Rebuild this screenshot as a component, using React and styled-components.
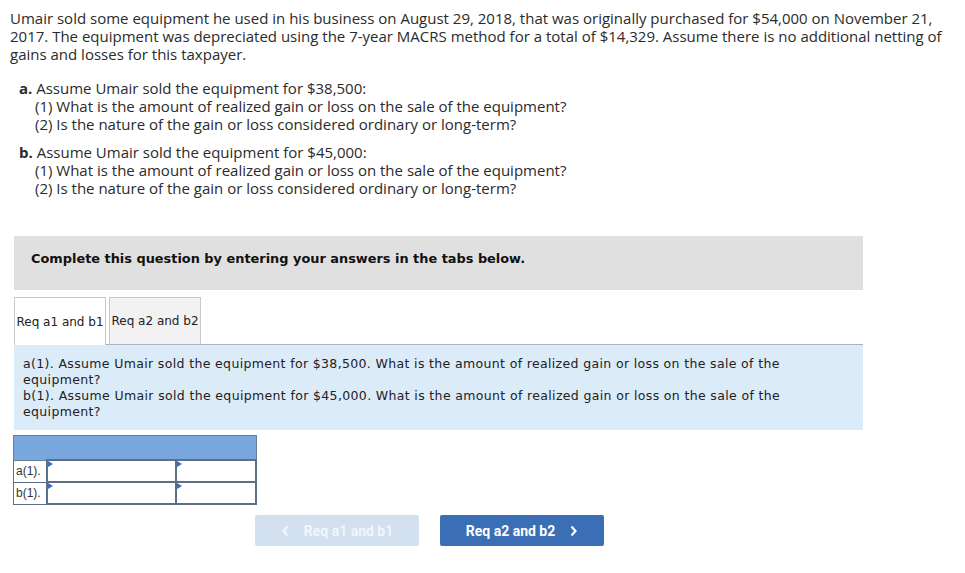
import styled, { createGlobalStyle } from "styled-components";

const GlobalStyle = createGlobalStyle`
  body {
    margin: 0;
    background: #fff;
  }
`;

const Page = styled.div`
  padding: 9px 10px 20px;
  width: 945px;
  box-sizing: border-box;
`;

const Intro = styled.p`
  margin: 0;
  font-family: "Open Sans", sans-serif;
  font-size: 15px;
  line-height: 18px;
  color: #2b2b2b;
  width: 935px;
`;

const Parts = styled.div`
  margin: 16px 0 0 9px;
  font-family: "Open Sans", sans-serif;
  font-size: 15px;
  line-height: 18px;
  color: #2b2b2b;
`;

const Part = styled.div`
  margin-bottom: 10px;
`;

const Letter = styled.b`
  color: #2b2b2b;
`;

const Sub = styled.div`
  padding-left: 16px;
`;

const Instruction = styled.div`
  margin: 39px 0 0 4px;
  width: 849px;
  height: 54px;
  background: #e0e0e0;
  display: flex;
  align-items: center;
  padding: 0 0 9px 17px;
  box-sizing: border-box;
  font-family: "DejaVu Sans", Verdana, sans-serif;
  font-weight: bold;
  font-size: 12.9px;
  color: #111;
`;

const Tabs = styled.div`
  display: flex;
  gap: 3px;
  margin: 7px 0 0 4px;
  width: 849px;
  border-bottom: 1px solid #a9b4c2;
`;

const Tab = styled.div`
  width: 92px;
  box-sizing: border-box;
  border: 1px solid #c8c8c8;
  border-bottom: none;
  background: ${(p) => (p.$active ? "#fff" : "#f2f2f2")};
  margin-bottom: ${(p) => (p.$active ? "-1px" : "0")};
  height: ${(p) => (p.$active ? "48px" : "47px")};
  display: flex;
  align-items: center;
  justify-content: center;
  font-family: "DejaVu Sans", Verdana, sans-serif;
  font-size: 12px;
  color: #222;
  white-space: nowrap;
`;

const Info = styled.div`
  margin-left: 4px;
  width: 849px;
  background: #dcebf8;
  padding: 11px 9px 10px;
  box-sizing: border-box;
  font-family: "DejaVu Sans", Verdana, sans-serif;
  font-size: 12.5px;
  line-height: 16px;
  color: #222;
  letter-spacing: 0.35px;
`;

const Table = styled.table`
  margin: 5px 0 0 3px;
  border-collapse: collapse;
  font-family: "Liberation Sans", Arial, sans-serif;
  font-size: 12px;
  color: #333;
`;

const HeadCell = styled.td`
  height: 23px;
  padding: 0;
  background: #7aa6de;
  border: 1px solid #6a7f99;
`;

const LabelCell = styled.td`
  width: 30px;
  height: 20px;
  padding: 0 0 0 2px;
  border: 1px solid #5c6f88;
  background: #fff;
`;

const InputCell = styled.td`
  position: relative;
  width: ${(p) => p.$w}px;
  height: 20px;
  padding: 0;
  border: 2px solid #5c6f88;
  background: #fff;

  &::before {
    content: "";
    position: absolute;
    left: 0;
    top: 0;
    border-left: 5px solid #3d6eb8;
    border-top: 3px solid transparent;
    border-bottom: 3px solid transparent;
  }
`;

const Nav = styled.div`
  display: flex;
  gap: 21px;
  margin: 10px 0 0 245px;
`;

const NavButton = styled.div`
  width: 164px;
  height: 31px;
  border-radius: 2px;
  background: ${(p) => (p.$disabled ? "#d3e0ef" : "#3a6fb6")};
  color: ${(p) => (p.$disabled ? "#f2f6fb" : "#fff")};
  display: flex;
  align-items: center;
  justify-content: center;
  gap: 14px;
  font-family: Roboto, "Liberation Sans", sans-serif;
  font-weight: bold;
  font-size: 14px;
`;

const Chevron = ({ dir }) => (
  <svg width="9" height="12" viewBox="0 0 9 12">
    <path
      d={dir === "left" ? "M6.5 1.5 L2.5 6 L6.5 10.5" : "M2.5 1.5 L6.5 6 L2.5 10.5"}
      fill="none"
      stroke="currentColor"
      strokeWidth="2.2"
    />
  </svg>
);

export default function App() {
  return (
    <>
      <GlobalStyle />
      <Page>
        <Intro>
          Umair sold some equipment he used in his business on August 29, 2018,
          that was originally purchased for $54,000 on November 21, 2017. The
          equipment was depreciated using the 7-year MACRS method for a total of
          $14,329. Assume there is no additional netting of gains and losses for
          this taxpayer.
        </Intro>
        <Parts>
          <Part>
            <Letter>a.</Letter> Assume Umair sold the equipment for $38,500:
            <Sub>(1) What is the amount of realized gain or loss on the sale of the equipment?</Sub>
            <Sub>(2) Is the nature of the gain or loss considered ordinary or long-term?</Sub>
          </Part>
          <Part>
            <Letter>b.</Letter> Assume Umair sold the equipment for $45,000:
            <Sub>(1) What is the amount of realized gain or loss on the sale of the equipment?</Sub>
            <Sub>(2) Is the nature of the gain or loss considered ordinary or long-term?</Sub>
          </Part>
        </Parts>
        <Instruction>Complete this question by entering your answers in the tabs below.</Instruction>
        <Tabs>
          <Tab $active>Req a1 and b1</Tab>
          <Tab>Req a2 and b2</Tab>
        </Tabs>
        <Info>
          a(1). Assume Umair sold the equipment for $38,500. What is the amount of
          realized gain or loss on the sale of the
          <br />
          equipment?
          <br />
          b(1). Assume Umair sold the equipment for $45,000. What is the amount of
          realized gain or loss on the sale of the
          <br />
          equipment?
        </Info>
        <Table>
          <tbody>
            <tr>
              <HeadCell colSpan={3} />
            </tr>
            <tr>
              <LabelCell>a(1).</LabelCell>
              <InputCell $w={127} />
              <InputCell $w={78} />
            </tr>
            <tr>
              <LabelCell>b(1).</LabelCell>
              <InputCell $w={127} />
              <InputCell $w={78} />
            </tr>
          </tbody>
        </Table>
        <Nav>
          <NavButton $disabled>
            <Chevron dir="left" />
            Req a1 and b1
          </NavButton>
          <NavButton>
            Req a2 and b2
            <Chevron dir="right" />
          </NavButton>
        </Nav>
      </Page>
    </>
  );
}
